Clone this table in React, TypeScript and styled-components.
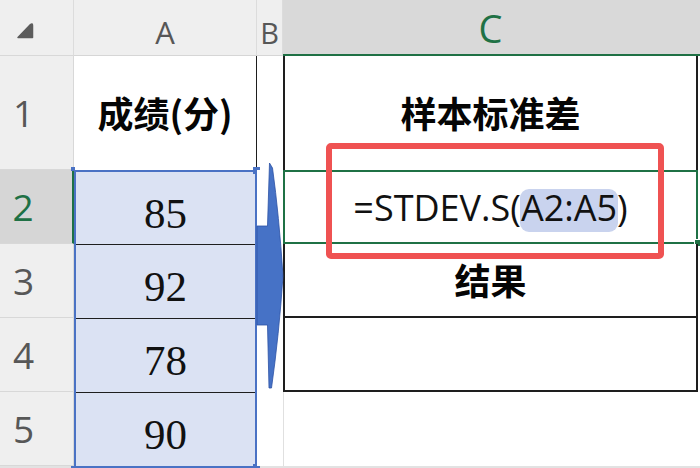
import React from "react";
import styled, { createGlobalStyle } from "styled-components";

const GREEN = "#1f7145";
const BLUE = "#4a72c4";
const LINE = "#1e1e1e";

const Global = createGlobalStyle`
  *, *::before, *::after { box-sizing: border-box; }
  html, body { margin: 0; padding: 0; background: #fff; }
  body { font-family: "Open Sans", "Liberation Sans", sans-serif; }
`;

const Sheet = styled.div`
  position: relative;
  display: grid;
  grid-template-columns: 74px 183px 26px 415px 2px;
  grid-template-rows: 56px 114px 74px 74px 74px 74px 2px;
  width: 700px;
  height: 468px;
  background: #e2e2e2;
  overflow: hidden;
`;

const Corner = styled.div`
  background: #efefef;
  border-right: 1px solid #dcdcdc;
  border-bottom: 1px solid #d8d8d8;
  padding: 22px 0 0 16px;
`;

const ColHeader = styled.div<{ $active?: boolean; $size?: number }>`
  display: flex;
  align-items: center;
  justify-content: center;
  padding-top: ${(p) => (p.$active ? 2 : 10)}px;
  background: ${(p) => (p.$active ? "#d9d9d9" : "#efefef")};
  color: ${(p) => (p.$active ? GREEN : "#575757")};
  font-size: ${(p) => p.$size ?? 28}px;
  line-height: 1;
  border-right: ${(p) => (p.$active ? "none" : "1px solid #dcdcdc")};
  border-bottom: ${(p) => (p.$active ? `2px solid ${GREEN}` : "1px solid #d6d6d6")};
`;

const RowHeader = styled.div<{ $active?: boolean }>`
  display: flex;
  align-items: center;
  justify-content: center;
  padding-right: 26px;
  background: ${(p) => (p.$active ? "#d6d6d6" : "#efefef")};
  color: ${(p) => (p.$active ? GREEN : "#575757")};
  font-size: 37px;
  line-height: 1;
  border-bottom: 1px solid #d8d8d8;
  border-right: ${(p) => (p.$active ? `2px solid ${GREEN}` : "1px solid #d8d8d8")};
`;

const Cell = styled.div<{
  $top?: string;
  $right?: string;
  $bottom?: string;
  $left?: string;
}>`
  position: relative;
  display: flex;
  align-items: center;
  justify-content: center;
  background: #fff;
  border-top: ${(p) => p.$top ?? "none"};
  border-right: ${(p) => p.$right ?? "none"};
  border-bottom: ${(p) => p.$bottom ?? "none"};
  border-left: ${(p) => p.$left ?? "none"};
`;

const Title = styled.span`
  font-family: "Noto Sans CJK SC", "Noto Sans", sans-serif;
  font-weight: 700;
  font-size: 36px;
  color: #050505;
  line-height: 1.2;
`;

const Range = styled.div`
  grid-column: 2;
  grid-row: 3 / 8;
  position: relative;
  display: grid;
  grid-template-rows: 73px 74px 74px 1fr;
  border: 2px solid ${BLUE};
  background: #dbe2f3;
`;

const ValueCell = styled.div<{ $last?: boolean }>`
  display: flex;
  align-items: center;
  justify-content: center;
  padding-top: 10px;
  border-bottom: ${(p) => (p.$last ? "none" : `1.5px solid ${LINE}`)};
  font-family: "Liberation Serif", "DejaVu Serif", serif;
  font-size: 43px;
  color: #111;
`;

const Handle = styled.span<{ $pos: "tl" | "tr" | "bl" | "br"; $size?: number }>`
  position: absolute;
  width: ${(p) => p.$size ?? 7}px;
  height: ${(p) => p.$size ?? 7}px;
  background: ${BLUE};
  ${(p) => (p.$pos[0] === "t" ? "top" : "bottom")}: -5px;
  ${(p) => (p.$pos[1] === "l" ? "left" : "right")}: -5px;
`;

const FillHandle = styled.span`
  position: absolute;
  right: -5px;
  bottom: -4px;
  width: 6px;
  height: 6px;
  background: ${GREEN};
  outline: 1px solid #fff;
`;

const Formula = styled.span`
  font-family: "Open Sans", "Liberation Sans", sans-serif;
  font-size: 36px;
  color: #111;
  white-space: nowrap;
`;

const Ref = styled.span`
  display: inline-block;
  line-height: 36px;
  padding: 1px 1px 6px;
  margin: 0 -1px;
  border-radius: 9px;
  background: #c9d3ee;
`;

const Callout = styled.div`
  position: absolute;
  left: 326px;
  top: 143px;
  width: 338px;
  height: 116px;
  border: 6px solid #ef5252;
  border-radius: 5px;
  pointer-events: none;
`;

const ArrowSvg = styled.svg`
  position: absolute;
  left: 255px;
  top: 160px;
  overflow: visible;
`;

const Filler = styled.div<{ $header?: boolean }>`
  background: ${(p) => (p.$header ? "#d9d9d9" : "#fff")};
  border-bottom: ${(p) => (p.$header ? `2px solid ${GREEN}` : "none")};
`;

const SelectAll = () => (
  <svg width="18" height="17" viewBox="0 0 18 17">
    <path
      d="M2 15.5 L14.5 2.5 Q16.5 1 16.5 3.5 L16.5 15.5 Z"
      fill="#5c5c5c"
      stroke="#5c5c5c"
      strokeWidth="1.5"
      strokeLinejoin="round"
    />
  </svg>
);

const Arrow = () => (
  <ArrowSvg width="32" height="232" viewBox="255 160 32 232">
    <path
      d="M269.5 163 L272.5 168 Q279 215 283 276 Q279 335 271.5 388 L269 388 L267.5 325 L257 325 L257 226 L267.5 226 Z"
      fill="#4672c6"
      stroke="#2c52a4"
      strokeWidth="0.8"
      strokeLinejoin="round"
    />
  </ArrowSvg>
);

const values = ["85", "92", "78", "90"];
const DARK = `2px solid ${LINE}`;
const GRID = "1px solid #e0e0e0";
const SEL = `2px solid ${GREEN}`;

export default function App() {
  return (
    <>
      <Global />
      <Sheet>
        <Corner>
          <SelectAll />
        </Corner>
        <ColHeader $size={31}>A</ColHeader>
        <ColHeader $size={29}>B</ColHeader>
        <ColHeader $active $size={38}>
          C
        </ColHeader>
        <Filler $header />

        <RowHeader>1</RowHeader>
        <Cell $right={`1.5px solid ${LINE}`}>
          <Title>成绩(分)</Title>
        </Cell>
        <Cell />
        <Cell $left={DARK} $right={DARK}>
          <Title>样本标准差</Title>
        </Cell>
        <Filler />

        <RowHeader $active>2</RowHeader>
        <Range>
          {values.map((v, i) => (
            <ValueCell key={v} $last={i === values.length - 1}>
              {v}
            </ValueCell>
          ))}
          <Handle $pos="tl" $size={4} />
          <Handle $pos="tr" />
          <Handle $pos="bl" $size={5} />
          <Handle $pos="br" />
        </Range>
        <Cell />
        <Cell $top={SEL} $right={SEL} $bottom={SEL} $left={SEL}>
          <Formula>
            =STDEV.S(<Ref>A2:A5</Ref>)
          </Formula>
          <FillHandle />
        </Cell>
        <Filler />

        <RowHeader>3</RowHeader>
        <Cell />
        <Cell $left={DARK} $right={DARK} $bottom={DARK}>
          <Title>结果</Title>
        </Cell>
        <Filler />

        <RowHeader>4</RowHeader>
        <Cell />
        <Cell $left={DARK} $right={DARK} $bottom={DARK} />
        <Filler />

        <RowHeader>5</RowHeader>
        <Cell />
        <Cell $left={GRID} />
        <Filler />

        <Arrow />
        <Callout />
      </Sheet>
    </>
  );
}
